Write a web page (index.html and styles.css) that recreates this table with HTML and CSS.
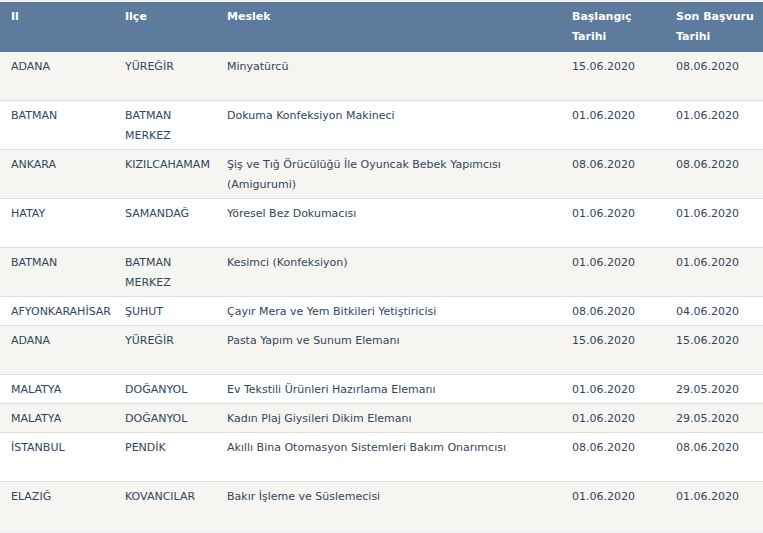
FILE: index.html
```html
<!DOCTYPE html>
<html lang="tr">
<head>
<meta charset="utf-8">
<title>Kurslar</title>
<link rel="stylesheet" href="styles.css">
</head>
<body>
<div class="page">
<table class="grid">
  <colgroup>
    <col class="c-il"><col class="c-ilce"><col class="c-meslek"><col class="c-bas"><col class="c-son">
  </colgroup>
  <thead>
    <tr><th>Il</th><th>Ilçe</th><th>Meslek</th><th>Başlangıç Tarihi</th><th>Son Başvuru Tarihi</th></tr>
  </thead>
  <tbody>
    <tr class="tall"><td>ADANA</td><td>YÜREĞİR</td><td>Minyatürcü</td><td>15.06.2020</td><td>08.06.2020</td></tr>
    <tr class="tall"><td>BATMAN</td><td>BATMAN MERKEZ</td><td>Dokuma Konfeksiyon Makineci</td><td>01.06.2020</td><td>01.06.2020</td></tr>
    <tr class="tall"><td>ANKARA</td><td>KIZILCAHAMAM</td><td>Şiş ve Tığ Örücülüğü İle Oyuncak Bebek Yapımcısı (Amigurumi)</td><td>08.06.2020</td><td>08.06.2020</td></tr>
    <tr class="tall"><td>HATAY</td><td>SAMANDAĞ</td><td>Yöresel Bez Dokumacısı</td><td>01.06.2020</td><td>01.06.2020</td></tr>
    <tr class="tall"><td>BATMAN</td><td>BATMAN MERKEZ</td><td>Kesimci (Konfeksiyon)</td><td>01.06.2020</td><td>01.06.2020</td></tr>
    <tr><td>AFYONKARAHİSAR</td><td>ŞUHUT</td><td>Çayır Mera ve Yem Bitkileri Yetiştiricisi</td><td>08.06.2020</td><td>04.06.2020</td></tr>
    <tr class="tall"><td>ADANA</td><td>YÜREĞİR</td><td>Pasta Yapım ve Sunum Elemanı</td><td>15.06.2020</td><td>15.06.2020</td></tr>
    <tr><td>MALATYA</td><td>DOĞANYOL</td><td>Ev Tekstili Ürünleri Hazırlama Elemanı</td><td>01.06.2020</td><td>29.05.2020</td></tr>
    <tr><td>MALATYA</td><td>DOĞANYOL</td><td>Kadın Plaj Giysileri Dikim Elemanı</td><td>01.06.2020</td><td>29.05.2020</td></tr>
    <tr class="tall"><td>İSTANBUL</td><td>PENDİK</td><td>Akıllı Bina Otomasyon Sistemleri Bakım Onarımcısı</td><td>08.06.2020</td><td>08.06.2020</td></tr>
    <tr class="tall"><td>ELAZIĞ</td><td>KOVANCILAR</td><td>Bakır İşleme ve Süslemecisi</td><td>01.06.2020</td><td>01.06.2020</td></tr>
  </tbody>
</table>
</div>
</body>
</html>
```
FILE: styles.css
```css
html, body {
  margin: 0;
  padding: 0;
  background: #f3f3f2;
}
.page {
  padding-top: 2px;
}
.grid {
  width: 763px;
  border-collapse: collapse;
  table-layout: fixed;
  font-family: "DejaVu Sans", Verdana, sans-serif;
  font-size: 11px;
  line-height: 20px;
  color: #30465e;
}
.c-il { width: 114px; }
.c-ilce { width: 102px; }
.c-meslek { width: 345px; }
.c-bas { width: 104px; }
.c-son { width: 98px; }
.grid th {
  background: #5d7b9d;
  color: #ffffff;
  font-weight: bold;
  text-align: left;
  vertical-align: top;
  padding: 5px 6px 5px 11px;
  height: 40px;
  box-sizing: content-box;
}
.grid td {
  vertical-align: top;
  text-align: left;
  padding: 5px 6px 3px 11px;
  border-bottom: 1px solid #dcdcdc;
}
.grid tbody tr:nth-child(odd) td { background: #f6f5f1; }
.grid tbody tr:nth-child(even) td { background: #ffffff; }
.grid tbody tr:last-child td { border-bottom: 0; }
.grid tr.tall td { height: 40px; }
```
